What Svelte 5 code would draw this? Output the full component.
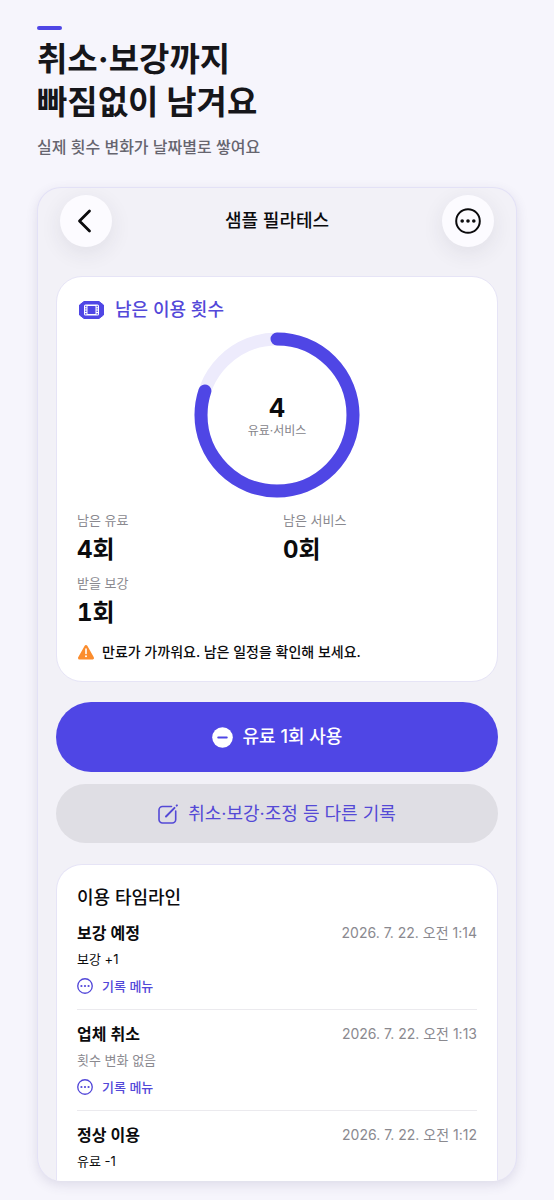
<script>
  const total = 5;
  const remaining = 4;
  const radius = 76;
  const circumference = 2 * Math.PI * radius;

  const stats = [
    { label: "남은 유료", value: "4회" },
    { label: "남은 서비스", value: "0회" },
    { label: "받을 보강", value: "1회" },
  ];

  const records = [
    { title: "보강 예정", date: "2026. 7. 22. 오전 1:14", change: "보강 +1", menu: true },
    { title: "업체 취소", date: "2026. 7. 22. 오전 1:13", change: "횟수 변화 없음", muted: true, menu: true },
    { title: "정상 이용", date: "2026. 7. 22. 오전 1:12", change: "유료 -1" },
  ];
</script>

{#snippet moreIcon(size, stroke)}
  <svg width={size} height={size} viewBox="0 0 26 26" aria-hidden="true">
    <circle cx="13" cy="13" r="11.8" fill="none" stroke="currentColor" stroke-width={stroke} />
    <circle cx="7.2" cy="13" r="1.8" fill="currentColor" />
    <circle cx="13" cy="13" r="1.8" fill="currentColor" />
    <circle cx="18.8" cy="13" r="1.8" fill="currentColor" />
  </svg>
{/snippet}

<div class="page">
  <header class="intro">
    <div class="accent"></div>
    <h1>취소·보강까지<br />빠짐없이 남겨요</h1>
    <p>실제 횟수 변화가 날짜별로 쌓여요</p>
  </header>

  <main class="screen">
    <nav class="bar">
      <button class="round" aria-label="뒤로">
        <svg width="26" height="26" viewBox="0 0 26 26" aria-hidden="true">
          <path d="M16.5 3 6.5 13l10 10" fill="none" stroke="currentColor" stroke-width="2.8" stroke-linecap="round" stroke-linejoin="round" />
        </svg>
      </button>
      <h2>샘플 필라테스</h2>
      <button class="round" aria-label="더보기">{@render moreIcon(26, 2)}</button>
    </nav>

    <section class="card">
      <h3 class="label">
        <svg width="25" height="18" viewBox="0 0 25 18" aria-hidden="true">
          <path d="M5 .5h15l4.500 3.500v10L20 17.500H5L.5 14V4z" fill="#4f46e5" stroke="#4f46e5" stroke-linejoin="round" />
          <rect x="5" y="3.5" width="15" height="11" rx="1.5" fill="#fff" />
          <rect x="8.5" y="5" width="8" height="8" fill="#4f46e5" />
          <path d="M6.800 4.800v8.600M18.200 4.800v8.600" stroke="#4f46e5" stroke-width="1.300" stroke-dasharray="1.400 1" />
        </svg>
        남은 이용 횟수
      </h3>

      <div class="ring">
        <svg width="166" height="166" viewBox="0 0 166 166" aria-hidden="true">
          <g fill="none" stroke-width="13" transform="rotate(-90 83 83)">
            <circle cx="83" cy="83" r={radius} stroke="#edebfc" />
            <circle
              cx="83"
              cy="83"
              r={radius}
              stroke="#4f46e5"
              stroke-linecap="round"
              stroke-dasharray="{(circumference * remaining) / total} {circumference}"
            />
          </g>
        </svg>
        <div class="count">
          <strong>{remaining}</strong>
          <span>유료·서비스</span>
        </div>
      </div>

      <dl class="stats">
        {#each stats as stat}
          <div>
            <dt>{stat.label}</dt>
            <dd>{stat.value}</dd>
          </div>
        {/each}
      </dl>

      <p class="warning">
        <svg width="18" height="16" viewBox="0 0 18 16" aria-hidden="true">
          <path d="M9 2.500 15.500 14h-13z" fill="#fb8c2d" stroke="#fb8c2d" stroke-width="3" stroke-linejoin="round" />
          <path d="M9 5v4.500" stroke="#fff" stroke-width="1.600" stroke-linecap="round" />
          <circle cx="9" cy="12.2" r="1" fill="#fff" />
        </svg>
        만료가 가까워요. 남은 일정을 확인해 보세요.
      </p>
    </section>

    <div class="actions">
      <button class="primary">
        <svg width="21" height="21" viewBox="0 0 21 21" aria-hidden="true">
          <circle cx="10.5" cy="10.5" r="10.3" fill="#fff" />
          <path d="M6.200 10.500h8.600" stroke="#4f46e5" stroke-width="1.900" stroke-linecap="round" />
        </svg>
        유료 1회 사용
      </button>
      <button class="secondary">
        <svg width="20" height="20" viewBox="0 0 20 20" fill="none" stroke="currentColor" stroke-linecap="round" aria-hidden="true">
          <path d="M13.500 2.500H4.500A3.500 3.500 0 0 0 1 6v9.500A3.500 3.500 0 0 0 4.500 19h9.700a3.500 3.500 0 0 0 3.500-3.500V7" stroke-width="1.600" />
          <path d="M8 12.500 16.500 3.900" stroke-width="2" />
          <path d="M18.700 1.600l.2-.2" stroke-width="2" />
        </svg>
        취소·보강·조정 등 다른 기록
      </button>
    </div>

    <section class="card timeline">
      <h3>이용 타임라인</h3>
      <ul>
        {#each records as record}
          <li>
            <div class="row">
              <h4>{record.title}</h4>
              <time>{record.date}</time>
            </div>
            <p class:muted={record.muted}>{record.change}</p>
            {#if record.menu}
              <button class="menu">{@render moreIcon(16, 2.2)} 기록 메뉴</button>
            {/if}
          </li>
        {/each}
      </ul>
    </section>
  </main>
</div>

<style>
  :global(body) {
    background: #f6f5fc;
  }

  .page {
    box-sizing: border-box;
    display: flex;
    flex-direction: column;
    height: 100vh;
    padding: 26px 37px 19px;
    font-family: Inter, "Noto Sans CJK KR", sans-serif;
    color: #0b0b0d;
  }

  h1,
  h2,
  h3,
  h4,
  p,
  ul,
  dl,
  dd {
    margin: 0;
    padding: 0;
  }

  svg {
    flex: none;
    display: block;
  }

  button {
    border: 0;
    padding: 0;
    background: none;
    font: inherit;
    color: inherit;
    cursor: pointer;
  }

  .accent {
    width: 25px;
    height: 4px;
    border-radius: 2px;
    background: #4f46e5;
  }

  h1 {
    margin-top: 8px;
    font-size: 33px;
    line-height: 43px;
    font-weight: 700;
    color: #16161a;
  }

  .intro p {
    margin: 11px 0 28px;
    font-size: 16px;
    line-height: 24px;
    font-weight: 500;
    color: #66656f;
  }

  .screen {
    flex: 1;
    display: flex;
    flex-direction: column;
    min-height: 0;
    overflow: hidden;
    padding: 7px 18px 0;
    border: 1px solid #e3e1f6;
    border-bottom: 0;
    border-radius: 24px;
    background: #f2f1f7;
    box-shadow: 0 4px 12px rgba(60, 55, 110, 0.13);
  }

  .bar {
    display: flex;
    align-items: center;
    justify-content: space-between;
    margin: 0 4px 29px;
  }

  h2 {
    font-size: 18px;
    line-height: 24px;
    font-weight: 500;
  }

  .round {
    display: grid;
    place-items: center;
    width: 52px;
    height: 52px;
    border-radius: 50%;
    background: #fcfbff;
    box-shadow: 0 6px 22px rgba(40, 40, 70, 0.09);
  }

  .card {
    padding: 20px 20px 18px;
    border: 1px solid #e6e4f6;
    border-radius: 26px;
    background: #fff;
  }

  .label {
    display: flex;
    align-items: center;
    gap: 11px;
    padding-left: 2px;
    font-size: 18px;
    line-height: 26px;
    font-weight: 500;
    color: #5348d9;
  }

  .ring {
    display: grid;
    place-items: center;
    margin: 9px 0 12px;
  }

  .ring > * {
    grid-area: 1 / 1;
  }

  .count {
    display: flex;
    flex-direction: column;
    align-items: center;
    padding-top: 4px;
  }

  .count strong {
    font-size: 25px;
    line-height: 28px;
    font-weight: 700;
  }

  .count span {
    font-size: 12px;
    line-height: 18px;
    color: #85848a;
  }

  .stats {
    display: grid;
    grid-template-columns: 1fr 1fr;
    gap: 7px 12px;
  }

  dt {
    font-size: 13px;
    line-height: 20px;
    color: #8a898f;
  }

  dd {
    margin-top: 4px;
    font-size: 24px;
    line-height: 32px;
    font-weight: 700;
    font-variant-numeric: tabular-nums;
  }

  .warning {
    display: flex;
    align-items: center;
    gap: 7px;
    margin-top: 12px;
    font-size: 14px;
    line-height: 22px;
    font-weight: 500;
  }

  .actions {
    display: flex;
    flex-direction: column;
    gap: 12px;
    margin: 20px 0 21px;
  }

  .actions button {
    display: flex;
    align-items: center;
    justify-content: center;
    gap: 10px;
    border-radius: 36px;
    font-size: 18px;
    line-height: 26px;
  }

  .actions .primary {
    padding: 22px 20px;
    background: #4f46e5;
    color: #fff;
    font-weight: 500;
  }

  .actions .secondary {
    padding: 17px 20px 16px;
    background: #dfdee4;
    color: #5449d6;
  }

  .timeline {
    flex: 1;
    padding-bottom: 0;
    border-bottom: 0;
    border-radius: 26px 26px 0 0;
  }

  .timeline h3 {
    margin-bottom: 10px;
    font-size: 18px;
    line-height: 26px;
    font-weight: 500;
  }

  ul {
    list-style: none;
  }

  li + li {
    margin-top: 13px;
    padding-top: 12px;
    border-top: 1px solid #ebeaee;
  }

  .row {
    display: flex;
    align-items: center;
    justify-content: space-between;
  }

  h4 {
    font-size: 16px;
    line-height: 24px;
    font-weight: 600;
  }

  time {
    font-size: 14px;
    line-height: 24px;
    color: #8a898f;
  }

  li p {
    margin-top: 4px;
    font-size: 13px;
    line-height: 20px;
  }

  .muted {
    color: #8a898f;
  }

  .menu {
    display: flex;
    align-items: center;
    gap: 9px;
    margin-top: 7px;
    font-size: 13px;
    line-height: 20px;
    font-weight: 500;
    color: #5348d9;
  }
</style>
